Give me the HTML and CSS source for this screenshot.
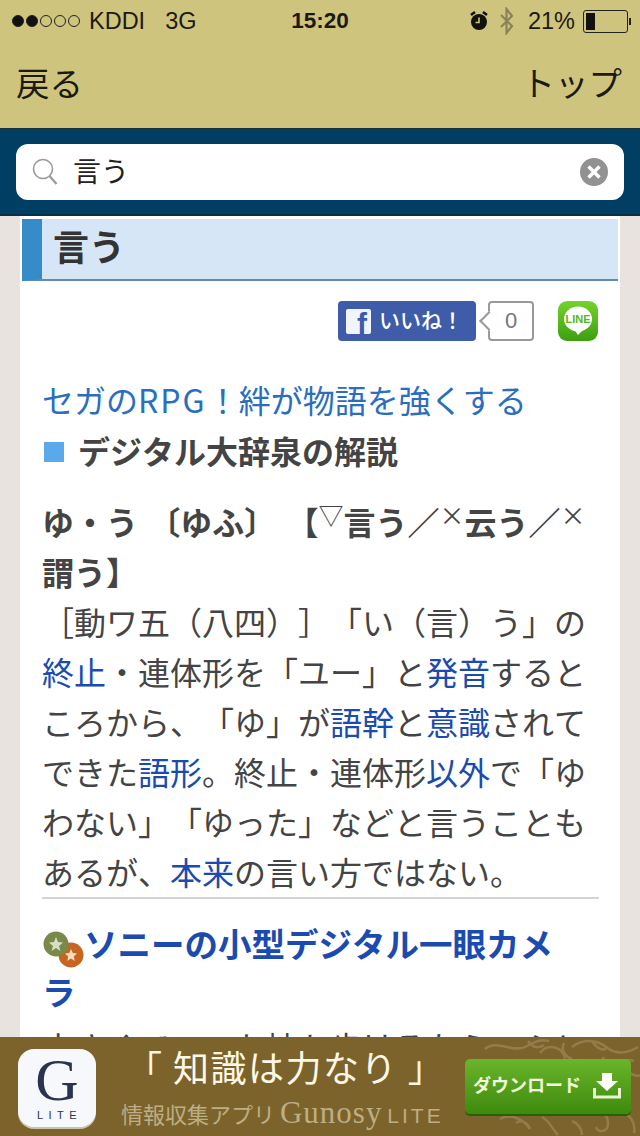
FILE: index.html
```html
<!DOCTYPE html>
<html lang="ja">
<head>
<meta charset="utf-8">
<title>言う</title>
<link rel="stylesheet" href="styles.css">
</head>
<body>
<div class="page">
  <header class="top">
    <div class="status">
      <div class="status-left">
        <span class="signal"><i class="on"></i><i class="on"></i><i></i><i></i><i></i></span>
        <span class="carrier">KDDI</span>
        <span class="net">3G</span>
      </div>
      <div class="clock">15:20</div>
      <div class="status-right">
        <svg class="alarm" width="20" height="22" viewBox="0 0 20 22"><circle cx="10" cy="12" r="8" fill="#111"/><path d="M2 5l4-3M18 5l-4-3" stroke="#111" stroke-width="2.6" fill="none"/><path d="M10 7.5V12.5H6.5" stroke="#cfc47e" stroke-width="1.6" fill="none"/></svg>
        <svg class="bt" width="16" height="28" viewBox="0 0 16 28"><path d="M2 8l11 11-5.500 7V2L13 9 2 20" stroke="#8a8258" stroke-width="2.200" fill="none"/></svg>
        <span class="pct">21%</span>
        <span class="battery"><span class="level"></span></span>
      </div>
    </div>
    <nav class="nav"><span>戻る</span><span>トップ</span></nav>
  </header>
  <section class="search">
    <div class="field">
      <svg class="lens" width="26" height="28" viewBox="0 0 26 28"><circle cx="11" cy="11" r="9.500" fill="none" stroke="#9a9a9a" stroke-width="1.600"/><path d="M17.500 18l7 8" stroke="#9a9a9a" stroke-width="2.200"/></svg>
      <span class="query">言う</span>
      <svg class="clear" width="28" height="28" viewBox="0 0 28 28"><circle cx="14" cy="14" r="14" fill="#929292"/><path d="M8.500 8.500l11 11M19.500 8.500l-11 11" stroke="#fff" stroke-width="3.400"/></svg>
    </div>
  </section>
  <main class="sheet">
    <h1 class="title"><span class="title-text">言う</span></h1>
    <div class="share">
      <span class="like"><span class="fb">f</span><span class="like-text">いいね！</span></span>
      <span class="count">0</span>
      <svg class="line" width="40" height="40" viewBox="0 0 40 40">
        <defs><linearGradient id="lg" x1="0" y1="0" x2="0" y2="1"><stop offset="0" stop-color="#74d42a"/><stop offset="1" stop-color="#3d9e12"/></linearGradient></defs>
        <rect width="40" height="40" rx="9" fill="url(#lg)"/>
        <ellipse cx="20" cy="18" rx="14" ry="12.500" fill="#fff"/>
        <path d="M16 28l4 6 6-6z" fill="#fff"/>
        <text x="20" y="22" class="line-text">LINE</text>
      </svg>
    </div>
    <div class="article">
      <a class="promo">セガの<span class="latin">RPG</span>！絆が物語を強くする</a>
      <h2 class="source"><span class="square"></span><span>デジタル大辞泉の解説</span></h2>
      <p class="entry">ゆ・う 〔ゆふ〕 【<sup class="mark">▽</sup>言う／<sup class="mark">×</sup>云う／<sup class="mark">×</sup>謂う】</p>
      <p class="body">［動ワ五（八四）］「い（言）う」の<a>終止</a>・連体形を「ユー」と<a>発音</a>するところから、「ゆ」が<a>語幹</a>と<a>意識</a>されてできた<a>語形</a>。終止・連体形<a>以外</a>で「ゆわない」「ゆった」などと言うこともあるが、<a>本来</a>の言い方ではない。</p>
      <hr class="rule">
      <h3 class="related">
        <svg class="stars" width="44" height="38" viewBox="0 0 44 38"><circle cx="29" cy="24" r="12.500" fill="#c7641f"/><circle cx="14" cy="13" r="12.500" fill="#78894a"/><path d="M14 6l2 5 5 .5-4 3.500 1.500 5-4.500-3-4.500 3 1.500-5-4-3.500 5-.5z" fill="#d7dfc2"/><path d="M29 18l1.800 4 4.200.5-3.200 3 1 4.500-3.800-2.500-3.800 2.500 1-4.500-3.200-3 4.200-.5z" fill="#f8dcc0"/></svg><a>ソニーの小型デジタル一眼カメラ</a>
      </h3>
      <p class="body clipped">小さくていいた持ち歩けるなら、ふと</p>
    </div>
  </main>
  <aside class="ad">
    <div class="app-icon"><span class="g">G</span><span class="lite">LITE</span></div>
    <div class="ad-copy">
      <div class="ad-head">「 知識は力なり 」</div>
      <div class="ad-sub">情報収集アプリ <span class="serif">Gunosy</span> <span class="lite2">LITE</span></div>
    </div>
    <svg class="ornament" width="160" height="99" viewBox="0 0 160 99" fill="none" stroke="#a8966a" stroke-width="2.500"><path d="M5 12c12-10 28 4 40-2s14-8 24-6M10 24c10 6 22-4 32 4M60 16c8-10 20-6 24 2s-6 14-12 8M92 10c10-8 24-8 34 0s22 6 32 0M100 22c6 8 20 6 24-2M130 28c8 0 14-8 24-4M20 82c10-6 24 0 30 10M62 80c8 4 10 12 16 18M110 78c8-6 18-2 18 8s-10 10-12 4M140 76c10 0 16 10 14 20M48 4c4 6 10 8 16 4M112 4c4 6 8 10 14 8M148 34c4 4 8 6 12 4M0 28c6 4 10 8 18 6M84 6c-4 8 2 14 8 16M36 86c6-4 12 0 14 6M92 84c6 2 10 8 10 14"/></svg>
    <div class="download"><span class="dl-text">ダウンロード</span>
      <svg width="28" height="26" viewBox="0 0 28 26"><path d="M9 0h10v8h6L14 18 3 8h6z" fill="#fff"/><path d="M1.500 15v9h25v-9" stroke="#e8f3cf" stroke-width="3" fill="none"/></svg>
    </div>
  </aside>
</div>
</body>
</html>
```
FILE: styles.css
```css
* { box-sizing: border-box; }
html, body { margin: 0; padding: 0; }
body {
  width: 640px;
  height: 1136px;
  overflow: hidden;
  font-family: "Noto Sans CJK JP", "Noto Sans", sans-serif;
  color: #444;
  text-spacing-trim: space-all;
  font-kerning: none;
}
.page {
  position: relative;
  width: 640px;
  height: 1136px;
  overflow: hidden;
  display: flex;
  flex-direction: column;
  background: #e9e3df;
}
.top { height: 129px; background: #cfc47e; color: #1c1a10; border-bottom: 1px solid #17313a; flex: none; }
.status {
  height: 42px;
  padding: 0 12px 0 12px;
  display: grid;
  grid-template-columns: 1fr auto 1fr;
  align-items: center;
  font-family: "Liberation Sans", sans-serif;
  font-size: 23.500px;
}
.status-left { display: flex; align-items: center; }
.signal { display: flex; gap: 2px; margin-right: 9px; }
.signal i { width: 12px; height: 12px; border-radius: 50%; border: 1px solid #222; display: block; }
.signal i.on { background: #111; }
.carrier { margin-right: 20px; }
.clock { font-weight: 700; font-size: 22.500px; }
.status-right { display: flex; align-items: center; justify-content: flex-end; }
.alarm { margin-right: 10px; }
.bt { margin-right: 13px; }
.pct { margin-right: 8px; }
.battery {
  width: 45px; height: 23px; border: 1px solid #222; border-radius: 3px; padding: 2px; display: block; position: relative;
}
.battery::after { content: ""; position: absolute; right: -4px; top: 7px; width: 2px; height: 7px; background: #222; }
.level { display: block; width: 9px; height: 100%; background: #111; }
.nav {
  height: 86px;
  padding: 0 18px 8px 16px;
  display: flex;
  justify-content: space-between;
  align-items: center;
  font-size: 33.500px;
}
.search { height: 87px; padding: 15px 16px 0; background: #003e63; border-bottom: 2px solid #0e2e3e; flex: none; }
.field {
  height: 56px;
  background: #fff;
  border-radius: 12px;
  display: flex;
  align-items: center;
  padding: 0 16px;
}
.lens { margin-right: 15px; }
.query { flex: 1; font-size: 28px; line-height: 50px; padding-bottom: 4px; color: #222; }
.sheet {
  width: 600px;
  margin: 0 auto;
  padding-top: 3px;
  background: #fff;
  flex: 1;
  min-height: 0;
  overflow: hidden;
}
.title {
  margin: 0 2px 0 2px;
  height: 62px;
  background: #d6e6f6;
  border-left: 20px solid #368cc8;
  border-bottom: 2px solid #5f8ea8;
  padding-left: 11px;
  font-size: 36px;
  line-height: 52px;
  color: #333;
  font-weight: 700;
}
.share {
  margin-top: 20px;
  height: 40px;
  padding-right: 22px;
  display: flex;
  justify-content: flex-end;
  align-items: center;
}
.like {
  width: 138px; height: 40px; background: #3f5ca8; border-radius: 4px; color: #fff;
  display: flex; align-items: center; padding-left: 8px;
}
.fb {
  width: 25px; height: 25px; background: #f1f4fa; color: #3f5ca8; border-radius: 2px;
  font: 700 30px/30px "Liberation Sans", sans-serif; text-align: right; padding-right: 4px; overflow: hidden;
}
.like-text { font-size: 21px; line-height: 36px; padding-bottom: 4px; font-weight: 500; margin-left: 8px; white-space: nowrap; }
.count {
  position: relative;
  width: 46px; height: 40px; margin-left: 12px; margin-right: 24px;
  border: 2px solid #999; border-radius: 4px; background: #fff; color: #777;
  font: 22px/36px "Liberation Sans", sans-serif; text-align: center;
}
.count::before {
  content: ""; position: absolute; left: -8px; top: 11px; width: 12px; height: 12px;
  background: #fff; border-left: 2px solid #999; border-bottom: 2px solid #999; transform: rotate(45deg);
}
.line-text { font: 700 11px "Liberation Sans", sans-serif; fill: #55b81c; text-anchor: middle; }
.article { padding: 0 21px 0 22px; font-size: 32px; line-height: 50px; }
a { color: #1b4bb0; }
.promo { display: block; margin-top: 33px; color: #2a6ec0; white-space: nowrap; }
.latin { letter-spacing: 2px; }
.source { margin: 1px 0 0; display: flex; align-items: center; font-size: 32px; line-height: 50px; font-weight: 700; color: #444; }
.square { width: 20px; height: 20px; background: #5aa9ea; margin: 3px 14px 0 2px; }
.entry { margin: 21px 0 0; font-weight: 700; word-spacing: 3px; }
.mark { font-size: 25px; font-weight: 400; line-height: 0; vertical-align: 10px; }
.body { margin: 0; }
.rule { border: 0; border-top: 2px solid #d4d4d4; margin: 1px 0 0; }
.related { margin: 22px 20px 0 0; font-size: 33.500px; line-height: 44px; font-weight: 700; }
.stars { vertical-align: -12px; margin-left: 0; margin-right: -2px; }
.clipped { margin-top: 8px; white-space: nowrap; }
.ad {
  position: absolute;
  left: 0; right: 0; bottom: 0;
  height: 99px;
  background: #7c632b;
  display: flex;
  align-items: flex-start;
  padding: 12px 0 0 18px;
}
.app-icon {
  width: 78px; height: 78px; border-radius: 16px; background: #f7f8fb; box-shadow: 0 2px 0 #c9c5a8;
  display: flex; flex-direction: column; align-items: center; color: #2a3350; flex: none; padding-top: 3px;
}
.g { font: 60px/57px "Liberation Serif", serif; }
.lite { font: 11px/12px "Liberation Sans", sans-serif; letter-spacing: 5.500px; margin-right: -5px; }
.ad-copy { margin-left: 25px; }
.ad-head { font-size: 36px; line-height: 44px; margin-top: -5px; color: #fdf8e6; white-space: nowrap; margin-left: 5px; letter-spacing: 1.500px; }
.ad-sub { font-size: 22px; line-height: 34px; margin-top: 7px; color: #bcae85; white-space: nowrap; }
.serif { font: 31px "Liberation Serif", serif; letter-spacing: 1px; }
.lite2 { font: 21px "Liberation Sans", sans-serif; letter-spacing: 3px; }
.ornament { position: absolute; right: 0; top: 0; opacity: .5; }
.download {
  position: absolute; left: 465px; top: 22px; width: 166px; height: 55px;
  border-radius: 5px;
  background: linear-gradient(#6ab52a, #3e8a0e);
  box-shadow: 0 2px 0 #2c5d0a;
  display: flex; align-items: center; padding-left: 8px;
  color: #f2f8dc; font-size: 18px; font-weight: 700; white-space: nowrap;
}
.dl-text { line-height: 26px; padding-bottom: 5px; }
.download svg { margin-left: 12px; margin-bottom: 2px; }
```
